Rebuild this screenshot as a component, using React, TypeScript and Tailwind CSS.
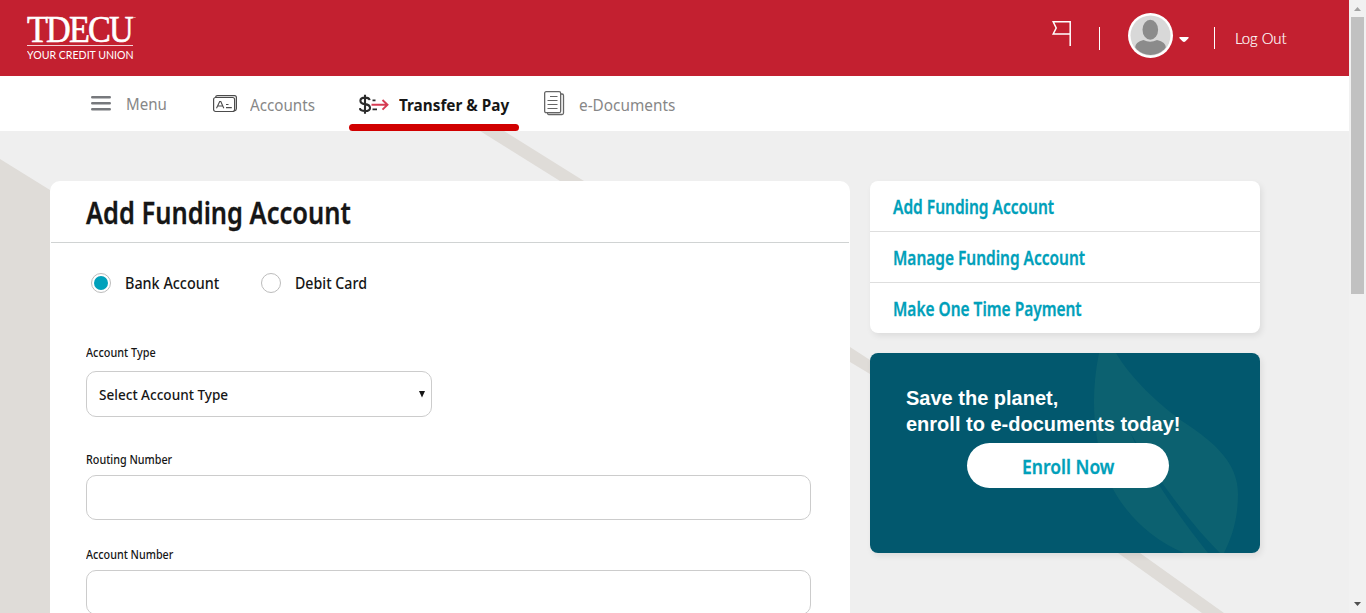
import React from "react";

type TextProps = { box: string; className: string; children: React.ReactNode };

// Condensed label: the box keeps the layout width, the inner span is narrowed.
function Narrow({ box, className, children }: TextProps) {
  return (
    <span className={`block shrink-0 whitespace-nowrap ${box}`}>
      <span className={`inline-block origin-left ${className}`}>{children}</span>
    </span>
  );
}

function Backdrop() {
  return (
    <svg className="absolute inset-0" width="1349" height="482" viewBox="0 131 1349 482" aria-hidden="true">
      <path d="M0 159 L50 190 L110 227 V613 H0 Z" fill="#dfdcd8" />
      <path
        d="M480 131 H504 L584 181 L850 347 L870 360 L1140 553 L1224 613 H1202 L1118 553 L870 374 L850 362 L560 181 Z"
        fill="#dfdcd8"
      />
    </svg>
  );
}

function Logo() {
  return (
    <div className="mt-[14px] ml-[27px] w-[110px] text-white">
      <div className="flex h-[31px] items-start">
        <Narrow box="w-[106px] leading-[31px] font-['Liberation_Serif',serif] text-[37px]" className="scale-x-[0.925] tracking-[-2px] [-webkit-text-stroke:0.6px_white]">
          TDECU
        </Narrow>
        <span className="mt-[2px] font-['Liberation_Sans',sans-serif] text-[3px] leading-[4px]">™</span>
      </div>
      <div className="h-px w-[106px] bg-white/80" />
      <Narrow box="mt-px w-[106px] h-4 leading-4 font-[Lato,sans-serif] text-[11.5px]" className="scale-x-[0.92]">
        YOUR CREDIT UNION
      </Narrow>
    </div>
  );
}

function Header() {
  return (
    <header className="flex h-[76px] justify-between bg-[#c32030]">
      <Logo />
      <div className="mr-[62px] flex text-white">
        <svg className="mt-[20px]" width="22" height="28" viewBox="0 0 22 28" fill="none" stroke="#fff" strokeWidth="1.5">
          <path d="M19.2 26V1.8H2.200L5.200 8 2.200 14H19.2" />
        </svg>
        <div className="mt-[27px] ml-[26px] h-[23px] w-px bg-white" />
        <svg className="mt-[12px] ml-[28px]" width="46" height="46" viewBox="0 0 46 46">
          <defs>
            <clipPath id="face">
              <circle cx="22.5" cy="23.5" r="19.5" />
            </clipPath>
          </defs>
          <circle cx="22.5" cy="23.5" r="22.5" fill="#fff" />
          <circle cx="22.5" cy="23.5" r="20" fill="#d8d8d8" />
          <g clipPath="url(#face)" fill="#8b8b8b">
            <ellipse cx="22.3" cy="17.8" rx="7.8" ry="10" />
            <path d="M7 43V36Q7 30 15.500 28Q22 31.500 29 28Q38 30 38 36V43Z" />
          </g>
        </svg>
        <svg className="mt-[37px] ml-[5px]" width="10" height="6" viewBox="0 0 10 6">
          <path d="M.5 0H9.500Q10 1 9 1.800L6.500 4.200Q5 5.600 3.500 4.200L1 1.800Q0 1 .5 0Z" fill="#fff" />
        </svg>
        <div className="mt-[27px] ml-[25px] h-[22px] w-px bg-white" />
        <Narrow box="ml-[20px] mt-[26px] w-[52px] leading-6 font-[Lato,sans-serif] text-[16px] font-light" className="scale-x-[0.93] [-webkit-text-stroke:0.2px_white]">
          Log Out
        </Narrow>
      </div>
    </header>
  );
}

function Nav() {
  return (
    <nav className="flex h-[55px] bg-white font-['Noto_Sans',sans-serif] text-[16.5px] leading-6 text-[#878787]">
      <svg className="mt-[19px] ml-[91px] shrink-0" width="20" height="16" viewBox="0 0 20 16" stroke="#77797d" strokeWidth="2.600" strokeLinecap="round">
        <path d="M1.300 2.300H18.700M1.300 8.300H18.700M1.300 14.300H18.700" />
      </svg>
      <Narrow box="mt-[16px] ml-[15px] w-[41px]" className="scale-x-[0.915]">Menu</Narrow>
      <svg className="mt-[19px] ml-[46px] shrink-0" width="24" height="18" viewBox="0 0 24 18" fill="none" stroke="#4c4c4c" strokeWidth="1.200">
        <path d="M2.500 2.300Q2.800.6 4.500.6H21.500Q23.400.6 23.400 2.500V13.500Q23.400 15.500 21.500 15.800" />
        <rect x=".6" y="2.500" width="21" height="14" rx="2" />
        <path d="M3.500 13.300L6.700 6.500H7.800L10.800 13.300M5 11H9.600M13 9.500H15.500M13 12.600H18.800" strokeWidth="1.100" />
      </svg>
      <Narrow box="mt-[17px] ml-[13px] w-[65px]" className="scale-x-[0.92]">Accounts</Narrow>
      <div className="ml-[34px] flex w-[170px] flex-col">
        <div className="flex h-[48px]">
          <svg className="mt-[18px] ml-[10px] shrink-0" width="30" height="21" viewBox="0 0 30 21" fill="none">
            <path d="M10.600 6.200Q10.200 3.600 6 3.600Q1.400 3.600 1.400 6.700Q1.400 9.500 6 10.100Q11 10.800 11 13.900Q11 17 6 17Q1.200 17 .8 14.200M6 .8V19.800" stroke="#2b2b2b" strokeWidth="2.100" />
            <path d="M13.500 6.300H16.500M13.500 15.300H18" stroke="#2b2b2b" strokeWidth="1.700" />
            <path d="M12.500 10.800H28.500M23.500 6L28.500 10.800L23.500 15.600" stroke="#d0213b" strokeOpacity=".88" strokeWidth="1.900" />
          </svg>
          <Narrow box="mt-[17px] ml-[10px] w-[110px] font-bold text-[#161616]" className="scale-x-[0.928]">Transfer &amp; Pay</Narrow>
        </div>
        <div className="h-[7px] rounded-full bg-[#d10000]" />
      </div>
      <svg className="mt-[15px] ml-[25px] shrink-0" width="21" height="25" viewBox="0 0 21 25" fill="none" stroke="#666" strokeWidth="1.300">
        <path d="M17 3H18Q19.500 3 19.500 4.500V22Q19.500 23.500 18 23.500H4.500Q3.500 23.500 3.500 22" />
        <rect x=".65" y=".65" width="16" height="21" rx="1.500" />
        <path d="M6 5.500H13.500M3.500 9.500H13.500M3.500 13.500H13.500M3.500 17.500H13.500" strokeWidth="1.100" />
      </svg>
      <Narrow box="mt-[17px] ml-[14px] w-[97px]" className="scale-x-[0.93]">e-Documents</Narrow>
    </nav>
  );
}

function FundingForm() {
  return (
    <section className="ml-[50px] h-[500px] w-[800px] rounded-t-[10px] bg-white px-px text-[#161616]">
      <div className="h-[62px] border-b border-[#d0d3d3] pl-[35px] pt-[12px]">
        <h1 className="text-[30px] font-semibold leading-10">
          <Narrow box="w-[264px]" className="scale-x-[0.848] [-webkit-text-stroke:0.3px_#161616]">Add Funding Account</Narrow>
        </h1>
      </div>
      <div className="pl-[35px]">
        <div className="mt-[30px] flex h-5 items-center pl-[5px] text-[16px] font-medium leading-5">
          <span className="flex size-5 items-center justify-center rounded-full border border-[#bcbcbc]">
            <span className="size-[14px] rounded-full bg-[#00a1bb]" />
          </span>
          <Narrow box="ml-[14px] w-[94px]" className="scale-x-[0.898]">Bank Account</Narrow>
          <span className="ml-[42px] size-5 rounded-full border border-[#bcbcbc]" />
          <Narrow box="ml-[14px] w-[72px]" className="scale-x-[0.887]">Debit Card</Narrow>
        </div>
        <div className="mt-[52px] text-[12.500px] font-medium leading-4">
          <Narrow box="w-[70px]" className="scale-x-[0.87]">Account Type</Narrow>
        </div>
        <div className="mt-[10px] flex h-[46px] w-[346px] items-center rounded-[10px] border border-[#ccc] pl-3 text-[15px] font-medium leading-6">
          <Narrow box="w-[129px]" className="scale-x-[0.905]">Select Account Type</Narrow>
          <svg className="ml-[191px]" width="6" height="7" viewBox="0 0 6 7">
            <path d="M0 0H6L3 6.500Z" fill="#161616" />
          </svg>
        </div>
        <div className="mt-[35px] text-[12.500px] font-medium leading-4">
          <Narrow box="w-[86px]" className="scale-x-[0.862]">Routing Number</Narrow>
        </div>
        <div className="mt-[7px] h-[45px] w-[725px] rounded-[10px] border border-[#ccc]" />
        <div className="mt-[27px] text-[12.500px] font-medium leading-4">
          <Narrow box="w-[87px]" className="scale-x-[0.861]">Account Number</Narrow>
        </div>
        <div className="mt-[7px] h-[45px] w-[725px] rounded-[10px] border border-[#ccc]" />
      </div>
    </section>
  );
}

function SideLinks() {
  return (
    <div className="h-[152px] rounded-[8px] bg-white text-[19px] font-semibold leading-[53px] text-[#00a0ba] shadow-[2px_3px_6px_rgba(0,0,0,0.08)]">
      <div className="h-[51px] border-b border-[#dedede] pl-[23px]">
        <Narrow box="w-[161px]" className="scale-x-[0.815] [-webkit-text-stroke:0.3px_#00a0ba]">Add Funding Account</Narrow>
      </div>
      <div className="h-[51px] border-b border-[#dedede] pl-[23px]">
        <Narrow box="w-[192px]" className="scale-x-[0.813] [-webkit-text-stroke:0.3px_#00a0ba]">Manage Funding Account</Narrow>
      </div>
      <div className="h-[50px] pl-[23px]">
        <Narrow box="w-[189px]" className="scale-x-[0.813] [-webkit-text-stroke:0.3px_#00a0ba]">Make One Time Payment</Narrow>
      </div>
    </div>
  );
}

function Promo() {
  return (
    <div className="mt-5 h-[200px] rounded-[8px] shadow-[2px_3px_6px_rgba(0,0,0,0.08)]">
      <div className="relative h-[200px] overflow-hidden rounded-[8px] bg-[#02586e]">
        <svg className="absolute inset-0" width="390" height="200" viewBox="0 0 390 200" aria-hidden="true">
          <path
            d="M229 0H246C260 24 290 53 315 70C345 90 368 110 368 141C368 166 362 184 354 200H314C275 184 245 150 234 115C224 82 220 45 229 0Z"
            fill="#0c6170"
          />
          <path d="M260 79C277 118 310 165 338 200H350C315 165 283 119 260 79Z" fill="#02586e" />
        </svg>
        <div className="relative pl-9 pt-8 font-['Liberation_Sans',sans-serif] text-[20px] font-bold leading-[26px] text-white">
          <p>Save the planet,</p>
          <p>enroll to e-documents today!</p>
        </div>
        <div className="relative ml-[97px] mt-[6px] h-[45px] w-[202px] rounded-full bg-white pl-[55px] text-[20.500px] font-semibold leading-[46px] text-[#00a0ba]">
          <Narrow box="w-[92px]" className="scale-x-[0.855] [-webkit-text-stroke:0.3px_#00a0ba]">Enroll Now</Narrow>
        </div>
      </div>
    </div>
  );
}

function Scrollbar() {
  return (
    <div className="flex w-[17px] flex-col bg-[#f1f1f1] px-[2px]">
      <svg className="h-[17px]" width="13" height="17" viewBox="0 0 13 17">
        <path d="M3 11L6.500 7L10 11Z" fill="#a3a3a3" />
      </svg>
      <div className="h-[277px] bg-[#c1c1c1]" />
      <svg className="mt-auto h-[17px]" width="13" height="17" viewBox="0 0 13 17">
        <path d="M3 6L6.500 10L10 6Z" fill="#505050" />
      </svg>
    </div>
  );
}

export default function App() {
  return (
    <div className="flex h-[613px] w-[1366px] overflow-hidden bg-[#efefef] font-['Noto_Sans',sans-serif]">
      <div className="w-[1349px]">
        <Header />
        <Nav />
        <main className="relative h-[482px] overflow-hidden">
          <Backdrop />
          <div className="relative flex pt-[50px]">
            <FundingForm />
            <aside className="ml-5 w-[390px]">
              <SideLinks />
              <Promo />
            </aside>
          </div>
        </main>
      </div>
      <Scrollbar />
    </div>
  );
}
